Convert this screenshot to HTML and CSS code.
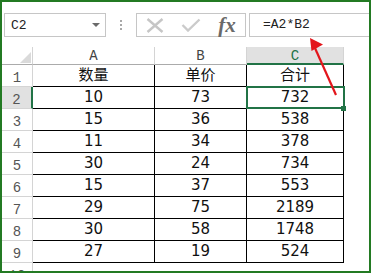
FILE: index.html
```html
<!DOCTYPE html>
<html lang="zh-CN">
<head>
  <meta charset="UTF-8" />
  <title>C2 = A2*B2</title>
  <link rel="stylesheet" href="styles.css">
</head>
<body>
  <div class="frame">
    <div class="fbar">
      <div class="namebox"><span>C2</span><i class="caret"></i></div>
      <div class="grip"><b></b><b></b><b></b></div>
      <div class="btns">
        <span class="btn">
          <svg width="18" height="15" viewBox="0 0 18 15"><path d="M1.5 1 L16.5 14 M16.5 1 L1.5 14" stroke="#c6c6c6" stroke-width="2.4" fill="none"/></svg>
        </span>
        <span class="btn">
          <svg width="20" height="14" viewBox="0 0 20 14"><path d="M1.5 7 L7 12.5 L18.5 1.5" stroke="#cbcbcb" stroke-width="2.4" fill="none"/></svg>
        </span>
        <span class="btn fx">fx</span>
      </div>
      <div class="formula">=A2*B2</div>
    </div>

    <div class="sheet">
      <div class="grid">
        <div class="corner"><i></i></div>
        <div class="ch">A</div>
        <div class="ch">B</div>
        <div class="ch on">C</div>

        <div class="rh">1</div><div class="c">数量</div><div class="c">单价</div><div class="c">合计</div>
        <div class="rh on">2</div><div class="c">10</div><div class="c">73</div><div class="c">732</div>
        <div class="rh">3</div><div class="c">15</div><div class="c">36</div><div class="c">538</div>
        <div class="rh">4</div><div class="c">11</div><div class="c">34</div><div class="c">378</div>
        <div class="rh">5</div><div class="c">30</div><div class="c">24</div><div class="c">734</div>
        <div class="rh">6</div><div class="c">15</div><div class="c">37</div><div class="c">553</div>
        <div class="rh">7</div><div class="c">29</div><div class="c">75</div><div class="c">2189</div>
        <div class="rh">8</div><div class="c">30</div><div class="c">58</div><div class="c">1748</div>
        <div class="rh">9</div><div class="c">27</div><div class="c">19</div><div class="c">524</div>
        <div class="rh">10</div><div class="e"></div><div class="e"></div><div class="e"></div>
      </div>
      <div class="sel"><i class="handle"></i></div>
    </div>

    <svg class="arrow" width="371" height="273" viewBox="0 0 371 273">
      <line x1="336" y1="95" x2="314.5" y2="47" stroke="#e3161c" stroke-width="2.2"/>
      <polygon points="310,38 323,44.5 311.5,51" fill="#e3161c"/>
    </svg>
  </div>
</body>
</html>
```

FILE: styles.css
```css
body {
  margin: 0;
  background: #fff;
}
.frame {
  position: relative;
  width: 371px;
  height: 273px;
  box-sizing: border-box;
  border: 2px solid #237a23;
  overflow: hidden;
  background: #fff;
}

/* formula bar */
.fbar {
  display: flex;
  height: 24px;
  margin-top: 11px;
}
.namebox {
  margin-left: 2px;
  width: 102px;
  box-sizing: border-box;
  border: 1px solid #c6c6c6;
  padding: 0 5px 0 6px;
  display: flex;
  align-items: center;
  justify-content: space-between;
  font: 13px "Liberation Mono", monospace;
  color: #222;
}
.caret {
  border-left: 4px solid transparent;
  border-right: 4px solid transparent;
  border-top: 4px solid #6a6a6a;
}
.grip {
  width: 30px;
  display: flex;
  flex-direction: column;
  align-items: center;
  justify-content: center;
  gap: 2px;
}
.grip b {
  width: 2px;
  height: 2px;
  background: #a8a8a8;
}
.btns {
  width: 110px;
  box-sizing: border-box;
  border: 1px solid #c6c6c6;
  display: flex;
  align-items: center;
}
.btn {
  width: 36px;
  display: flex;
  justify-content: center;
  align-items: center;
}
.fx {
  font: italic bold 21px "Liberation Serif", serif;
  color: #6a6a6a;
  line-height: 22px;
}
.formula {
  flex: 1;
  margin-left: 3px;
  border: 1px solid #c6c6c6;
  border-right: 0;
  padding-left: 13px;
  font: 13px "Liberation Mono", monospace;
  line-height: 22px;
  color: #222;
}

/* sheet */
.sheet {
  position: relative;
  margin-top: 10px;
}
.grid {
  display: grid;
  grid-template-columns: 31px 122px 92px 97px;
  grid-template-rows: 18px repeat(10, 22px);
}
.grid > div {
  box-sizing: border-box;
}
.corner {
  position: relative;
  border-right: 1px solid #d4d4d4;
  border-bottom: 1px solid #ababab;
}
.corner i {
  position: absolute;
  right: 1px;
  bottom: 1px;
  border-left: 11px solid transparent;
  border-bottom: 11px solid #dadada;
}
.ch {
  border-right: 1px solid #d4d4d4;
  border-bottom: 1px solid #ababab;
  text-align: center;
  font: 14px "Liberation Mono", monospace;
  color: #444;
  line-height: 18px;
}
.ch.on {
  background: #e1e1e1;
  color: #217346;
  border-bottom: 2px solid #217346;
}
.rh {
  border-right: 1px solid #d4d4d4;
  border-bottom: 1px solid #d4d4d4;
  display: flex;
  justify-content: center;
  align-items: flex-end;
  font: 14px "Liberation Mono", monospace;
  line-height: 16px;
  color: #555;
}
.rh.on {
  background: #e1e1e1;
  border-right: 2px solid #217346;
}
.c {
  border-right: 1px solid #000;
  border-bottom: 1px solid #000;
  text-align: center;
  font: 15px "DejaVu Sans", "Noto Sans CJK SC", sans-serif;
  line-height: 21px;
  color: #111;
}

/* active cell */
.sel {
  position: absolute;
  left: 244px;
  top: 39px;
  width: 99px;
  height: 23px;
  box-sizing: border-box;
  border: 2px solid #217346;
}
.handle {
  position: absolute;
  right: -3px;
  bottom: -4px;
  width: 5px;
  height: 5px;
  background: #217346;
}

.arrow {
  position: absolute;
  left: -2px;
  top: -2px;
}
```
